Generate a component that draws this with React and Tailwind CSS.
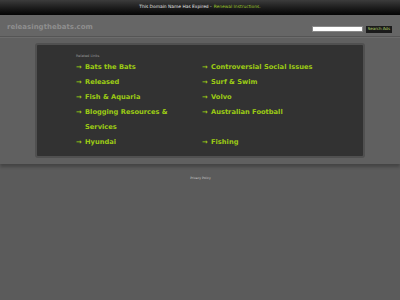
import React from 'react';

const leftLinks = ['Bats the Bats', 'Released', 'Fish & Aquaria', 'Blogging Resources & Services', 'Hyundai'];
const rightLinks = ['Controversial Social Issues', 'Surf & Swim', 'Volvo', 'Australian Football', 'Fishing'];

function LinkItem({ label }) {
    return (
        <li className="flex items-start">
            <span className="w-[9px] shrink-0">&#8594;</span>
            <span className="max-w-[104px]">{label}</span>
        </li>
    );
}

export default function App() {
    return (
        <div className="w-[400px] h-[300px] bg-[#5b5b5b] overflow-hidden" style={{ fontFamily: '"DejaVu Sans", Verdana, sans-serif' }}>
            {/* expired notice */}
            <div className="h-[15px] bg-gradient-to-b from-[#3c3c3c] to-[#050505] flex items-center justify-center text-[4.4px] text-[#e6e6e6]">
                This Domain Name Has Expired - <span className="ml-[2px] text-[#9dc22a]">Renewal Instructions.</span>
            </div>

            {/* header */}
            <div className="h-[22px] bg-[#666666] border-b border-[#555555] flex items-center justify-between pl-[7px] pr-[8px]">
                <span className="text-[7px] font-bold text-[#8e8e8e] mt-[4px]">releasingthebats.com</span>
                <div className="flex items-center gap-[3px] mt-[7px]">
                    <div className="w-[51px] h-[6px] bg-white border border-[#888888]"></div>
                    <div className="h-[7px] px-[2px] bg-[#1b1b1b] text-[4px] text-[#b8d46a] flex items-center">Search Ads</div>
                </div>
            </div>

            {/* main band */}
            <div className="bg-[#606060] border-t border-[#6c6c6c] pt-[5px] pb-[6px] shadow-[0_3px_3px_rgba(0,0,0,0.25)]">
                <div className="mx-[35px] h-[115px] rounded-[3px] bg-[#323232] border-[2px] border-[#505050] pl-[39px] pt-[9px]">
                    <div className="text-[3.5px] text-[#9a9a9a] leading-[4px]">Related Links</div>
                    <div className="flex mt-[2px] text-[6.7px] font-bold text-[#9ccb14] leading-[15px]">
                        <ul className="w-[126px]">
                            {leftLinks.map(l => <LinkItem key={l} label={l} />)}
                        </ul>
                        <ul className="w-[140px]">
                            {rightLinks.slice(0, 4).map(l => <LinkItem key={l} label={l} />)}
                            <li className="h-[15px]"></li>
                            <LinkItem label={rightLinks[4]} />
                        </ul>
                    </div>
                </div>
            </div>

            {/* footer */}
            <div className="pt-[12px] flex justify-center">
                <span className="text-[3px] text-[#d0d0d0] -mr-[1px]">Privacy Policy</span>
            </div>
        </div>
    );
}
